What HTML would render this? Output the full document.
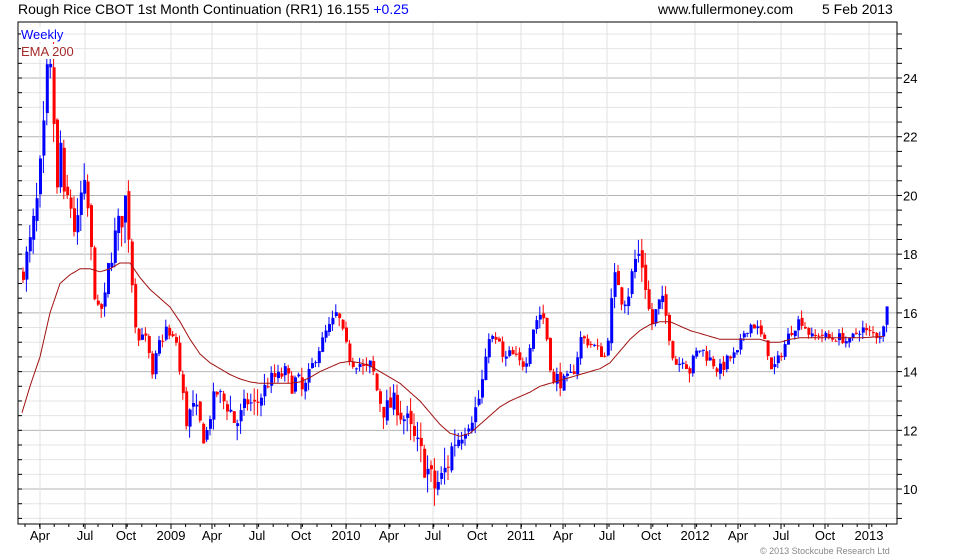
<!DOCTYPE html><html><head><meta charset="utf-8"><style>
body{margin:0;background:#fff;font-family:"Liberation Sans",sans-serif;}
#w{position:relative;width:980px;height:560px;overflow:hidden}
.t{position:absolute;font-size:14px;color:#000;white-space:nowrap}
</style></head><body><div id="w">
<div class="t" style="left:18px;top:1px">Rough Rice CBOT 1st Month Continuation (RR1) 16.155 <span style="color:#00f">+0.25</span></div>
<div class="t" style="left:658px;top:1px">www.fullermoney.com</div>
<div class="t" style="left:822px;top:1px">5 Feb 2013</div>
<svg id="s" width="980" height="560" style="position:absolute;left:0;top:0"></svg>
<div class="t" style="left:21px;top:27px;color:#00f;font-size:13px;background:#fff">Weekly</div>
<div class="t" style="left:21px;top:44px;color:#a52a2a;font-size:13px;background:#fff">EMA 200</div>
<div class="t" style="left:760px;top:546px;font-size:9px;color:#888">© 2013 Stockcube Research Ltd</div>
</div>
<script>
var s=document.getElementById('s'),h='';
function Y(p){return 78+(24-p)*29.36;}
var L=18,R=897,T=22,B=524;
for(var v=7.5;v<=26;v+=0.5){var y=Y(v);if(y<T||y>B)continue;var maj=(v%2==0);
h+='<line x1="'+L+'" x2="'+R+'" y1="'+y+'" y2="'+y+'" stroke="'+(maj?'#b4b4b4':'#e4e4e4')+'"/>';
h+='<line x1="'+R+'" x2="'+(R+5)+'" y1="'+y+'" y2="'+y+'" stroke="#000"/>';
h+='<line x1="'+L+'" x2="'+(L+4)+'" y1="'+y+'" y2="'+y+'" stroke="#000"/>';
if(maj)h+='<text x="903" y="'+(y+5)+'" font-size="13" font-family="Liberation Sans">'+v+'</text>';}
var labs=[['Apr',40],['Jul',85],['Oct',126],['2009',171],['Apr',212],['Jul',257],['Oct',301],['2010',346],['Apr',389],['Jul',433],['Oct',477],['2011',521],['Apr',563],['Jul',607],['Oct',651],['2012',695],['Apr',738],['Jul',781],['Oct',825],['2013',869]];
labs.forEach(function(a){h+='<line x1="'+a[1]+'" x2="'+a[1]+'" y1="'+T+'" y2="'+B+'" stroke="#e0e0e0"/><line x1="'+a[1]+'" x2="'+a[1]+'" y1="'+B+'" y2="'+(B+5)+'" stroke="#000"/>';
h+='<text x="'+a[1]+'" y="540" text-anchor="middle" font-size="13" font-family="Liberation Sans">'+a[0]+'</text>';});
for(var x=25;x<R;x+=14.6){h+='<line x1="'+x+'" x2="'+x+'" y1="'+B+'" y2="'+(B+3)+'" stroke="#000"/>';}
h+='<rect x="'+L+'" y="'+T+'" width="'+(R-L)+'" height="'+(B-T)+'" fill="none" stroke="#000"/>';
var k=[22,17.5,28,18.2,35,19.5,40,21,44,22.5,47,24.5,52,23,56,20,60,22,63,19.5,68,20,75,18.5,80,20,85,20,88,19,92,17,97,16,103,16.3,107,17.5,113,18.5,118,19,122,19.5,125,20,128,18.5,133,16,137,15,142,15.5,148,14.5,152,13.5,156,15,160,15,165,15.5,170,15,174,15.3,180,13.5,186,12.2,190,12.8,196,12.5,200,12,205,11.8,210,12.8,216,13.3,222,13,228,12.8,234,12.2,240,12.5,246,13,254,12.8,260,13.2,266,13.6,272,13.8,278,13.8,284,14,290,13.5,296,13.8,302,13.2,306,13.7,312,14.3,318,14.8,324,15.3,330,15.6,336,16,340,15.5,344,15,348,14.5,352,14.3,358,14.3,364,14,370,14.3,376,13.3,382,12.7,388,12.8,394,13,400,12.5,406,12.3,412,11.7,418,11.3,424,10.8,428,10.5,432,10,436,10.2,440,10.3,446,10.8,452,11.6,458,11.8,464,12.2,470,12.5,476,12.8,480,13.5,484,14.2,488,15.3,494,15,498,15,502,14.3,508,14.6,514,14.5,520,14.2,526,14.5,532,15.5,538,16,543,15.8,548,14.5,552,13.5,556,13.8,562,13.6,568,13.7,574,14.2,580,15.2,586,15,592,14.9,598,14.7,604,14.5,608,15.5,612,17,616,17.3,620,16.5,626,16.5,630,17.2,634,17.8,638,18,642,17.5,646,16.5,650,15.5,654,16,660,16.5,664,16,668,15.2,672,14.5,676,14.2,682,14.5,688,14,694,14.6,700,14.8,706,14.5,712,14.3,718,14,724,14.3,730,14.5,736,14.6,742,15.3,748,15.6,754,15.6,760,15.2,766,14.8,770,14,776,14.3,782,14.8,788,15.3,794,15.6,800,15.8,806,15.4,812,15.1,818,15.3,824,15.2,830,15.1,836,15.2,842,15.1,848,15,854,15.3,860,15.5,866,15.3,872,15.3,878,15.2,882,15.5,886,16.3];
function interp(a,x){for(var i=0;i<a.length-2;i+=2){if(x<=a[i+2]){var t=(x-a[i])/(a[i+2]-a[i]);return a[i+1]+t*(a[i+3]-a[i+1]);}}return a[a.length-1];}
var seed=7;function rnd(){seed=(seed*16807)%2147483647;return seed/2147483647;}
var prev=17.3;
for(var x=22;x<=887;x+=3.4){var lvl=Math.abs(interp(k,x)-15)*0.06+0.1;
var c=interp(k,x)+(x>880?0:(rnd()-0.5)*lvl*3);var o=prev+(rnd()-0.5)*lvl;
var hi=Math.max(o,c)+rnd()*lvl*2,lo=Math.min(o,c)-rnd()*lvl*2;
var col=c>=o?'#0000ff':'#ff0000';
h+='<line x1="'+(x+1)+'" x2="'+(x+1)+'" y1="'+Y(hi)+'" y2="'+Y(lo)+'" stroke="'+col+'"/>';
var yt=Y(Math.max(o,c)),hb=Math.max(1,Y(Math.min(o,c))-yt);
h+='<rect x="'+x+'" y="'+yt+'" width="3" height="'+hb+'" fill="'+col+'"/>';prev=c;}
var e=[22,12.6,30,13.5,40,14.5,50,16,60,17,70,17.3,80,17.5,90,17.5,100,17.4,110,17.5,120,17.7,130,17.7,140,17.2,150,16.8,160,16.5,170,16.2,180,15.7,190,15.1,200,14.6,210,14.3,220,14.1,230,13.9,240,13.75,250,13.65,260,13.6,270,13.6,280,13.6,290,13.6,300,13.65,310,13.8,320,14,330,14.15,340,14.3,350,14.35,360,14.3,370,14.2,380,14,390,13.8,400,13.6,410,13.3,420,13,430,12.6,440,12.2,450,11.9,460,11.8,470,11.9,480,12.2,490,12.5,500,12.8,510,13,520,13.15,530,13.3,540,13.5,550,13.6,560,13.7,570,13.8,580,13.9,590,14,600,14.1,610,14.3,620,14.7,630,15.1,640,15.4,650,15.6,660,15.7,670,15.7,680,15.55,690,15.4,700,15.3,710,15.2,720,15.1,730,15.1,740,15.1,750,15.1,760,15.1,770,15,780,15,790,15.1,800,15.15,820,15.15,840,15.15,860,15.15,885,15.2];
var pts='';for(var x=22;x<=885;x+=2)pts+=x+','+Y(interp(e,x)).toFixed(1)+' ';
h+='<polyline points="'+pts+'" fill="none" stroke="#a01010" stroke-width="1" stroke-linejoin="round"/>';
s.innerHTML=h;
</script></body></html>
